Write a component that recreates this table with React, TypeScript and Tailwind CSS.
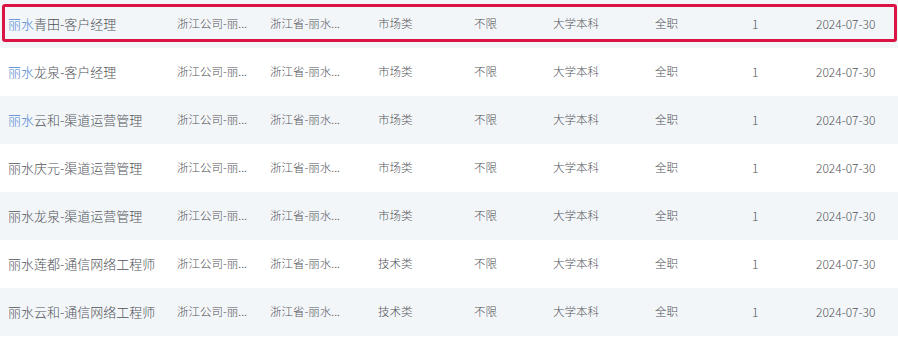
import React from 'react';

type Job = {
  city: string;
  title: string;
  company: string;
  region: string;
  category: string;
  major: string;
  degree: string;
  type: string;
  count: number;
  date: string;
  link?: boolean;
};

const jobs: Job[] = [
  { city: '丽水', title: '青田-客户经理', company: '浙江公司-丽...', region: '浙江省-丽水...', category: '市场类', major: '不限', degree: '大学本科', type: '全职', count: 1, date: '2024-07-30', link: true },
  { city: '丽水', title: '龙泉-客户经理', company: '浙江公司-丽...', region: '浙江省-丽水...', category: '市场类', major: '不限', degree: '大学本科', type: '全职', count: 1, date: '2024-07-30', link: true },
  { city: '丽水', title: '云和-渠道运营管理', company: '浙江公司-丽...', region: '浙江省-丽水...', category: '市场类', major: '不限', degree: '大学本科', type: '全职', count: 1, date: '2024-07-30', link: true },
  { city: '丽水', title: '庆元-渠道运营管理', company: '浙江公司-丽...', region: '浙江省-丽水...', category: '市场类', major: '不限', degree: '大学本科', type: '全职', count: 1, date: '2024-07-30' },
  { city: '丽水', title: '龙泉-渠道运营管理', company: '浙江公司-丽...', region: '浙江省-丽水...', category: '市场类', major: '不限', degree: '大学本科', type: '全职', count: 1, date: '2024-07-30' },
  { city: '丽水', title: '莲都-通信网络工程师', company: '浙江公司-丽...', region: '浙江省-丽水...', category: '技术类', major: '不限', degree: '大学本科', type: '全职', count: 1, date: '2024-07-30' },
  { city: '丽水', title: '云和-通信网络工程师', company: '浙江公司-丽...', region: '浙江省-丽水...', category: '技术类', major: '不限', degree: '大学本科', type: '全职', count: 1, date: '2024-07-30' },
];

export default function App() {
  return (
    <div
      className="w-[898px] h-[339px] bg-white text-[#505358] font-light overflow-hidden"
      style={{ fontFamily: '"Noto Sans CJK SC", "Noto Sans", sans-serif' }}
    >
      {jobs.map((job, i) => (
        <div
          key={i}
          className={`relative grid h-[48px] items-center grid-cols-[177px_93px_108px_96px_79px_102px_99px_62px_1fr] text-[11.5px] ${
            i % 2 === 0 ? 'bg-[#f3f6f9]' : 'bg-white'
          }`}
        >
          {/* selected row highlight */}
          {i === 0 && (
            <div className="absolute left-[2px] right-[1px] top-[4px] h-[38px] border-[3px] border-[#da1546] rounded-[3px] pointer-events-none" />
          )}
          <div className="pl-2 text-[13px] whitespace-nowrap">
            <span className={job.link ? 'text-[#4c86d2]' : ''}>{job.city}</span>
            {job.title}
          </div>
          <div className="whitespace-nowrap">{job.company}</div>
          <div className="whitespace-nowrap">{job.region}</div>
          <div>{job.category}</div>
          <div>{job.major}</div>
          <div>{job.degree}</div>
          <div>{job.type}</div>
          <div className="-ml-[2px] text-[12px]">{job.count}</div>
          <div className="text-[12px]">{job.date}</div>
        </div>
      ))}
    </div>
  );
}
